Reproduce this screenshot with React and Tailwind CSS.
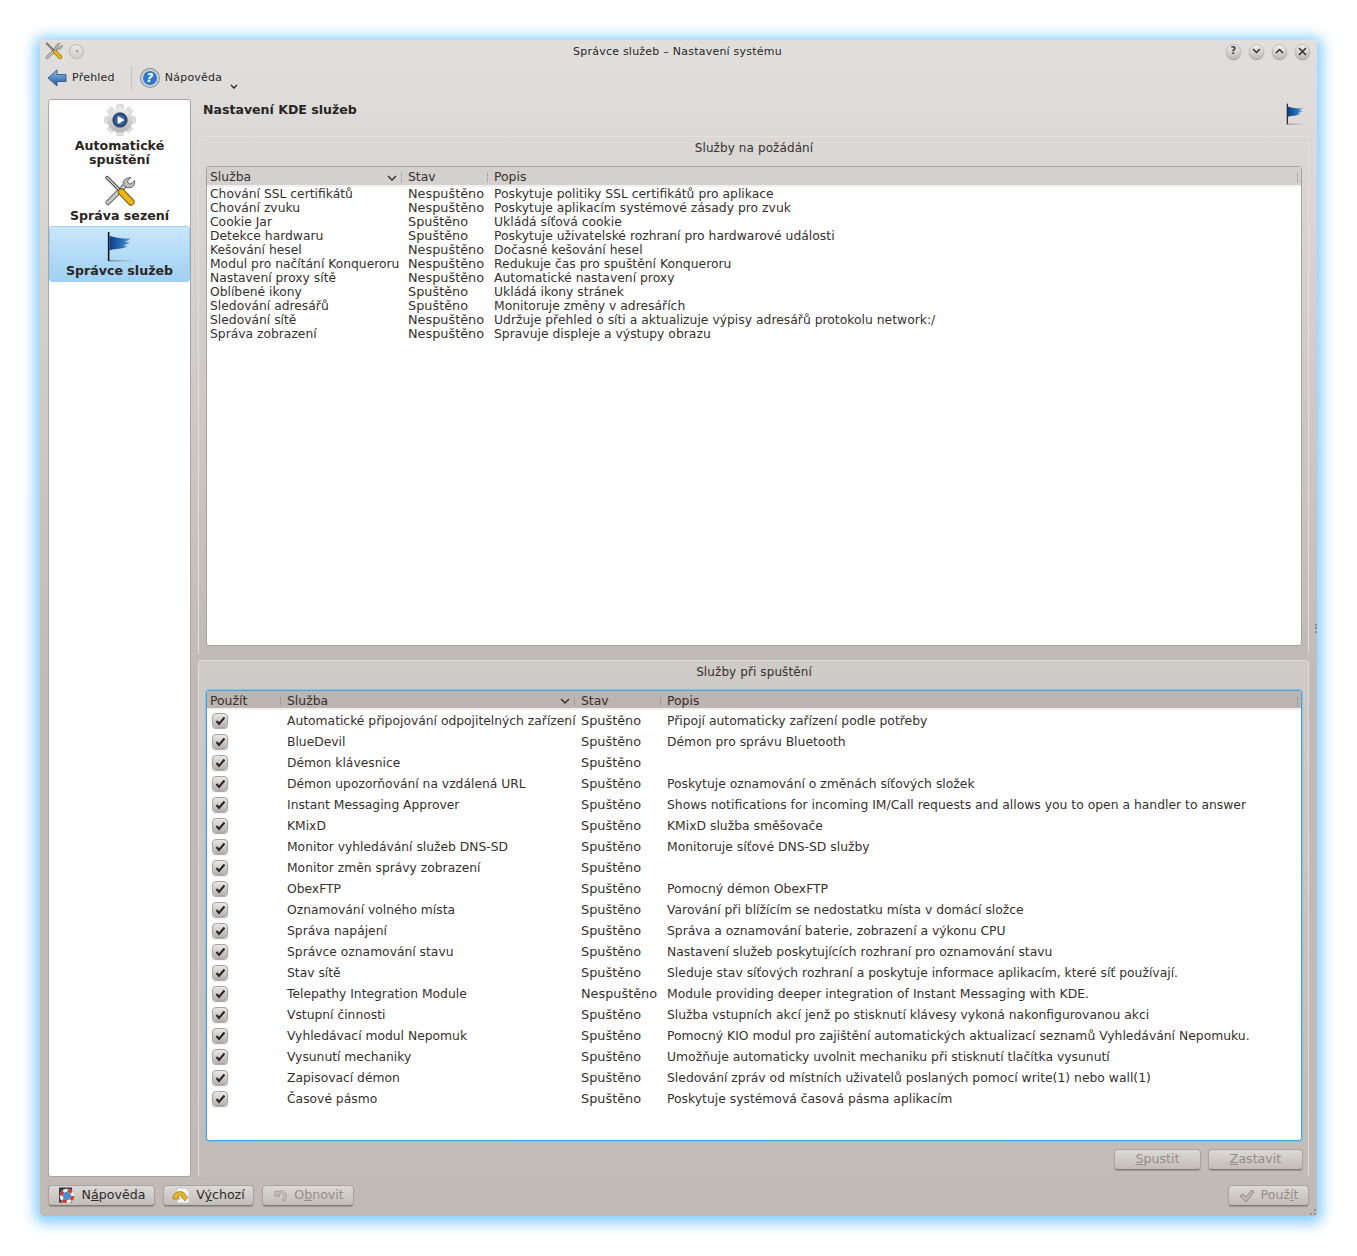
const F = '[font-family:"DejaVu_Sans",sans-serif]';

const t1 = [
  ['Chování SSL certifikátů','Nespuštěno','Poskytuje politiky SSL certifikátů pro aplikace'],
  ['Chování zvuku','Nespuštěno','Poskytuje aplikacím systémové zásady pro zvuk'],
  ['Cookie Jar','Spuštěno','Ukládá síťová cookie'],
  ['Detekce hardwaru','Spuštěno','Poskytuje uživatelské rozhraní pro hardwarové události'],
  ['Kešování hesel','Nespuštěno','Dočasné kešování hesel'],
  ['Modul pro načítání Konqueroru','Nespuštěno','Redukuje čas pro spuštění Konqueroru'],
  ['Nastavení proxy sítě','Nespuštěno','Automatické nastavení proxy'],
  ['Oblíbené ikony','Spuštěno','Ukládá ikony stránek'],
  ['Sledování adresářů','Spuštěno','Monitoruje změny v adresářích'],
  ['Sledování sítě','Nespuštěno','Udržuje přehled o síti a aktualizuje výpisy adresářů protokolu network:/'],
  ['Správa zobrazení','Nespuštěno','Spravuje displeje a výstupy obrazu'],
];
const t2 = [
  ['Automatické připojování odpojitelných zařízení','Spuštěno','Připojí automaticky zařízení podle potřeby'],
  ['BlueDevil','Spuštěno','Démon pro správu Bluetooth'],
  ['Démon klávesnice','Spuštěno',''],
  ['Démon upozorňování na vzdálená URL','Spuštěno','Poskytuje oznamování o změnách síťových složek'],
  ['Instant Messaging Approver','Spuštěno','Shows notifications for incoming IM/Call requests and allows you to open a handler to answer'],
  ['KMixD','Spuštěno','KMixD služba směšovače'],
  ['Monitor vyhledávání služeb DNS-SD','Spuštěno','Monitoruje síťové DNS-SD služby'],
  ['Monitor změn správy zobrazení','Spuštěno',''],
  ['ObexFTP','Spuštěno','Pomocný démon ObexFTP'],
  ['Oznamování volného místa','Spuštěno','Varování při blížícím se nedostatku místa v domácí složce'],
  ['Správa napájení','Spuštěno','Správa a oznamování baterie, zobrazení a výkonu CPU'],
  ['Správce oznamování stavu','Spuštěno','Nastavení služeb poskytujících rozhraní pro oznamování stavu'],
  ['Stav sítě','Spuštěno','Sleduje stav síťových rozhraní a poskytuje informace aplikacím, které síť používají.'],
  ['Telepathy Integration Module','Nespuštěno','Module providing deeper integration of Instant Messaging with KDE.'],
  ['Vstupní činnosti','Spuštěno','Služba vstupních akcí jenž po stisknutí klávesy vykoná nakonfigurovanou akci'],
  ['Vyhledávací modul Nepomuk','Spuštěno','Pomocný KIO modul pro zajištění automatických aktualizací seznamů Vyhledávání Nepomuku.'],
  ['Vysunutí mechaniky','Spuštěno','Umožňuje automaticky uvolnit mechaniku při stisknutí tlačítka vysunutí'],
  ['Zapisovací démon','Spuštěno','Sledování zpráv od místních uživatelů poslaných pomocí write(1) nebo wall(1)'],
  ['Časové pásmo','Spuštěno','Poskytuje systémová časová pásma aplikacím'],
];
const cellCls = ['text-[12.32px]', 'text-[12.85px]', 'text-[12.36px]'];
const cellCls2 = ['text-[12.32px] pt-[1px]', 'text-[12.85px]', 'text-[12.36px] pt-[1px]'];

function Flag({ size = 30 }) {
  return (
    <svg width={size} height={size} viewBox="0 0 32 32" className="shrink-0">
      <defs>
        <linearGradient id="fl" x1="0" x2="1" y1="0" y2="0">
          <stop offset="0" stopColor="#0b3f86" /><stop offset="0.6" stopColor="#2a70bd" /><stop offset="1" stopColor="#6aa6da" />
        </linearGradient>
        <linearGradient id="fs" x1="0" x2="1" y1="0" y2="0">
          <stop offset="0" stopColor="#555" stopOpacity="0.6" /><stop offset="1" stopColor="#555" stopOpacity="0" />
        </linearGradient>
      </defs>
      <rect x="5" y="30" width="26" height="1.5" fill="url(#fs)" />
      <rect x="4" y="1" width="1.6" height="30" fill="#111" />
      <path d="M5.6 5 C12 7 18 8 28 8 L22 11 L27 12 L20 15 L24 16 C18 19 12 18 5.6 20 Z" fill="url(#fl)" />
    </svg>
  );
}
function Tools({ size = 32 }) {
  return (
    <svg width={size} height={size} viewBox="0 0 32 32" className="shrink-0">
      <path d="M4 27.5 L21 10.5" stroke="#4c4c4c" strokeWidth="5" strokeLinecap="round" />
      <path d="M4 27.5 L21 10.5" stroke="#c4c6c6" strokeWidth="3.4" strokeLinecap="round" />
      <path d="M27 2.5 L23.5 6 L24.5 8.5 L27 9 L30.5 5.5 Q31.5 10.5 27.5 12.5 Q24 13.5 21.5 12 L19 9.5 Q18.5 3 27 2.5 Z" fill="#b9bbbb" stroke="#4c4c4c" strokeWidth="0.8" />
      <path d="M3 2.5 L16 15.5" stroke="#3c3c3c" strokeWidth="3.4" strokeLinecap="round" />
      <path d="M3 2.5 L16 15.5" stroke="#c9cbcb" strokeWidth="1.7" strokeLinecap="round" />
      <path d="M17.5 17 L27 27" stroke="#6b4e00" strokeWidth="7" strokeLinecap="round" />
      <path d="M17.5 17 L27 27" stroke="#efb516" strokeWidth="5.4" strokeLinecap="round" />
    </svg>
  );
}
function Gear() {
  const teeth = [0, 45, 90, 135, 180, 225, 270, 315];
  return (
    <svg width="32" height="32" viewBox="0 0 32 32" className="shrink-0">
      <defs>
        <linearGradient id="gg" x1="0" x2="0" y1="0" y2="1"><stop offset="0" stopColor="#f0f0f0" /><stop offset="1" stopColor="#b4b4b4" /></linearGradient>
        <radialGradient id="gb"><stop offset="0" stopColor="#6d9fd3" /><stop offset="1" stopColor="#15356a" /></radialGradient>
      </defs>
      {teeth.map(a => <rect key={a} x="12.8" y="0.5" width="6.4" height="7" rx="1" fill="url(#gg)" stroke="#a5a5a5" strokeWidth="0.4" transform={`rotate(${a} 16 16)`} />)}
      <circle cx="16" cy="16" r="12.5" fill="url(#gg)" />
      <circle cx="16" cy="16" r="7.5" fill="url(#gb)" stroke="#777" strokeWidth="0.5" />
      <path d="M13.8 12 L20.5 16 L13.8 20 Z" fill="#fff" />
    </svg>
  );
}
function Check() {
  return (
    <span className="flex h-[15px] w-[16px] items-center justify-center rounded-[4px] border border-[#aaa5a1] bg-gradient-to-b from-[#e9e7e5] to-[#b9b3af] shadow-[0_1px_1px_rgba(0,0,0,0.35)]">
      <svg width="11" height="10" viewBox="0 0 11 10"><path d="M1.5 5 L4 8 L9.5 1.5" fill="none" stroke="#252525" strokeWidth="2" /></svg>
    </span>
  );
}
function WinBtn({ children }) {
  return (
    <span className="flex h-[15px] w-[15px] items-center justify-center rounded-full border border-[#bdbab7] bg-gradient-to-b from-[#f2f1f0] to-[#c0bdba] text-[#444] shadow-[0_1px_1px_rgba(0,0,0,0.35)]">
      {children}
    </span>
  );
}
function Btn({ w, disabled, icon, children }) {
  return (
    <button className={`flex h-[21px] items-center justify-center gap-[6px] rounded-[4px] border border-[#aaa4a0] border-b-[#7f7975] bg-gradient-to-b from-[#dcd9d6] to-[#c3bdb9] text-[12.6px] leading-none shadow-[0_1px_1px_rgba(0,0,0,0.2)] ${w} ${disabled ? 'text-[#938d89]' : 'text-[#2e2a28]'}`}>
      {icon}{children}
    </button>
  );
}
function Head({ cols, children, focus }) {
  return (
    <div className={`grid shrink-0 items-center border-b-2 border-[#f2f0ee] pt-[3px] text-[12.4px] text-[#38302d] ${cols} ${focus ? 'h-[19px] bg-[#bdb5b1]' : 'h-[20px] bg-[#d4d0cd]'}`}>
      {children}
    </div>
  );
}
function HCell({ children, arrow }) {
  return (
    <div className="flex h-full items-center justify-between overflow-hidden pl-[3px] pr-[3px]">
      <span>{children}</span>
      <span className="flex items-center gap-[2px]">
        {arrow && <svg width="10" height="6" viewBox="0 0 10 6"><path d="M1 1 L5 5 L9 1" fill="none" stroke="#2f2a28" strokeWidth="1.3" /></svg>}
        <span className="ml-[2px] h-[9px] border-r border-dotted border-[#8d8783]" />
      </span>
    </div>
  );
}
function Side({ icon, label, active, cls }) {
  return (
    <div className={`flex flex-col items-center ${cls} ${active ? 'rounded-[3px] border border-[#9ed0f2] bg-gradient-to-b from-[#c9e7fb] to-[#9fd0f3]' : ''}`}>
      {icon}
      <div className="text-center text-[12.6px] font-bold leading-[14px] text-[#2a2522]">{label}</div>
    </div>
  );
}

export default function App() {
  const c1 = 'grid-cols-[198px_86px_1fr]';
  const c2 = 'grid-cols-[77px_294px_86px_1fr]';
  return (
    <div className={`h-[1256px] w-[1357px] bg-white pl-[40px] pt-[40px] ${F}`}>
      <div className="relative flex h-[1176px] w-[1277px] flex-col rounded-[3px] bg-gradient-to-b from-[#e1dfdd] to-[#c1bab6] to-55% shadow-[0_2px_14px_5px_rgba(110,195,250,0.85)]">
        {/* title bar */}
        <div className="grid h-[22px] shrink-0 grid-cols-[1fr_auto_1fr] items-center pl-[5px] pr-[7px]">
          <div className="flex items-center gap-[6px]">
            <Tools size={18} />
            <span className="flex h-[15px] w-[15px] items-center justify-center rounded-full border border-[#b9b6b3] bg-gradient-to-b from-[#ebe9e8] to-[#cfccc9]">
              <span className="h-[2px] w-[2px] rounded-full bg-[#888]" />
            </span>
          </div>
          <div className="pt-[2px] text-[11px] tracking-[0.23px] text-[#2a2522]">Správce služeb – Nastavení systému</div>
          <div className="flex items-center justify-end gap-[8px]">
            <WinBtn><span className="text-[10px] font-bold leading-none">?</span></WinBtn>
            <WinBtn><svg width="9" height="6" viewBox="0 0 9 6"><path d="M1 1 L4.5 4.5 L8 1" fill="none" stroke="#333" strokeWidth="1.5" /></svg></WinBtn>
            <WinBtn><svg width="9" height="6" viewBox="0 0 9 6"><path d="M1 5 L4.5 1.5 L8 5" fill="none" stroke="#333" strokeWidth="1.5" /></svg></WinBtn>
            <WinBtn><svg width="9" height="9" viewBox="0 0 9 9"><path d="M1 1 L8 8 M8 1 L1 8" fill="none" stroke="#333" strokeWidth="1.6" /></svg></WinBtn>
          </div>
        </div>
        {/* toolbar */}
        <div className="flex h-[31px] shrink-0 items-center pl-[7px] text-[11px] tracking-[0.22px] text-[#2a2522]">
          <svg width="20" height="20" viewBox="0 0 20 20">
            <defs><linearGradient id="ar" x1="0" x2="0" y1="0" y2="1"><stop offset="0" stopColor="#8db9e4" /><stop offset="1" stopColor="#1f5ea6" /></linearGradient></defs>
            <path d="M1 10 L10 2 L10 6.5 L19 6.5 L19 13.5 L10 13.5 L10 18 Z" fill="url(#ar)" stroke="#234d80" strokeWidth="0.8" />
          </svg>
          <span className="ml-[5px] pt-[1px]">Přehled</span>
          <span className="ml-[16px] h-[24px] border-l border-[#c5c2bf]" />
          <span className="ml-[9px] flex h-[18px] w-[18px] items-center justify-center rounded-full border-2 border-[#cfd3d6] bg-[#2f78c9] text-[12px] font-bold italic leading-none text-white shadow-[0_0_0_1px_#8b8b8b]">?</span>
          <span className="ml-[6px] pt-[1px]">Nápověda</span>
          <svg className="ml-[8px] mt-[18px]" width="8" height="6" viewBox="0 0 8 6"><path d="M1 1 L4 4 L7 1" fill="none" stroke="#222" strokeWidth="1.3" /></svg>
        </div>
        {/* content */}
        <div className="mt-[6px] flex h-[1078px] shrink-0 gap-[7px] pl-[8px] pr-[8px]">
          <div className="flex w-[143px] shrink-0 flex-col rounded-[3px] border border-[#aaa5a1] bg-white pt-[4px]">
            <Side cls="h-[71px] gap-[3px]" icon={<Gear />} label={<>Automatické<br />spuštění</>} />
            <Side cls="h-[51px] gap-[2px]" icon={<Tools />} label="Správa sezení" />
            <Side active cls="h-[56px] pt-[4px] gap-[2px]" icon={<Flag size={31} />} label="Správce služeb" />
          </div>
          <div className="flex min-w-0 flex-1 flex-col">
            <div className="flex h-[37px] shrink-0 items-start justify-between pl-[5px] pr-[3px]">
              <span className="pt-[3px] text-[12.55px] font-bold leading-[16px] text-[#2a2522]">Nastavení KDE služeb</span>
              <span className="pt-[4px]"><Flag size={22} /></span>
            </div>
            {/* group 1 */}
            <section className="flex h-[519px] shrink-0 flex-col rounded-[4px] border border-[#e2dfdd] border-b-[#c1bbb7] bg-gradient-to-b from-[#dbd8d5] to-[#c1bbb7] pb-[8px] pl-[7px] pr-[6px]">
              <div className="h-[29px] shrink-0 pt-[3px] text-center text-[12px] leading-[16px] tracking-[0.1px] text-[#38302d]">Služby na požádání</div>
              <div className="flex min-h-0 flex-1 flex-col overflow-hidden rounded-[3px] border border-[#a5a19e] bg-white">
                <Head cols={c1}>
                  <HCell arrow>Služba</HCell><HCell>Stav</HCell><HCell>Popis</HCell>
                </Head>
                <div className={`grid ${c1} auto-rows-[14px] leading-[14px] text-[#38302d]`}>
                  {t1.map(r => r.map((c, i) => <div key={r[0] + i} className={`whitespace-nowrap pl-[3px] ${cellCls[i]}`}>{c}</div>))}
                </div>
              </div>
            </section>
            {/* group 2 */}
            <section className="mt-[5px] flex min-h-0 flex-1 flex-col rounded-[4px] border border-[#dedbd8] border-b-0 bg-gradient-to-b from-[#cfcbc8] to-[#c2bcb8] pl-[7px] pr-[6px]">
              <div className="h-[29px] shrink-0 pt-[3px] text-center text-[12px] leading-[16px] tracking-[0.1px] text-[#38302d]">Služby při spuštění</div>
              <div className="flex h-[451px] shrink-0 flex-col overflow-hidden rounded-[3px] border border-[#3fa4e4] bg-white shadow-[0_0_1px_1px_rgba(110,192,240,0.7)]">
                <Head cols={c2} focus>
                  <HCell>Použít</HCell><HCell arrow>Služba</HCell><HCell>Stav</HCell><HCell>Popis</HCell>
                </Head>
                <div className="flex flex-col leading-[21px] text-[#38302d]">
                  {t2.map(r => (
                    <div key={r[0]} className={`grid h-[21px] grid-rows-[21px] ${c2}`}>
                      <div className="flex items-center pl-[5px]"><Check /></div>
                      {r.map((c, i) => <div key={i} className={`whitespace-nowrap pl-[3px] ${cellCls2[i]}`}>{c}</div>)}
                    </div>
                  ))}
                </div>
              </div>
              <div className="-mr-[1px] mt-[8px] flex justify-end gap-[7px]">
                <Btn w="w-[87px]" disabled><span><u>S</u>pustit</span></Btn>
                <Btn w="w-[95px]" disabled><span><u>Z</u>astavit</span></Btn>
              </div>
            </section>
          </div>
        </div>
        {/* bottom */}
        <div className="mt-[8px] flex items-center justify-between pl-[8px] pr-[8px]">
          <div className="flex gap-[8px]">
            <Btn w="w-[107px]" icon={
              <svg width="18" height="17" viewBox="0 0 18 17">
                <rect x="1" y="0.5" width="13" height="15" fill="#2f3a4a" />
                <circle cx="9" cy="9" r="5.8" fill="#4a90d0" stroke="#f4f4f4" strokeWidth="3" />
                <circle cx="9" cy="9" r="5.8" fill="none" stroke="#d43a2a" strokeWidth="3" strokeDasharray="4.6 4.5" />
              </svg>}>
              <span>N<u>á</u>pověda</span>
            </Btn>
            <Btn w="w-[91px]" icon={
              <svg width="18" height="17" viewBox="0 0 18 17">
                <path d="M5 1 L13 1 L17 4 L17 16 L5 16 Z" fill="#f4f4f2" stroke="#bbb" strokeWidth="0.6" />
                <path d="M1 10 Q2 5 8 4.5 Q13 4.5 14.5 10 L16 10 L13 14 L9.5 10 L11 10 Q9 8 6 9 L7.5 12 L1 12 Z" fill="#e6b52c" stroke="#8c6a10" strokeWidth="0.6" />
              </svg>}>
              <span>V<u>ý</u>chozí</span>
            </Btn>
            <Btn w="w-[92px]" disabled icon={
              <svg width="16" height="16" viewBox="0 0 16 16">
                <path d="M3 3 L3 8 L8 8 L6 6 Q9 4 11.5 6.5 Q13 9 10.5 12 L12.5 13.5 Q16 9.5 13.5 5 Q9.5 1 5 4 Z" fill="#c9c5c2" stroke="#918b87" strokeWidth="0.7" />
              </svg>}>
              <span>O<u>b</u>novit</span>
            </Btn>
          </div>
          <Btn w="w-[81px]" disabled icon={
            <svg width="16" height="14" viewBox="0 0 16 14">
              <path d="M1 7 L4 5 L7 8 L13 1 L15 3 L7 13 Z" fill="#bdb8b5" stroke="#827c78" strokeWidth="0.8" />
            </svg>}>
            <span>Použ<u>í</u>t</span>
          </Btn>
        </div>
        {/* splitter handle and size grip */}
        <span className="absolute left-[1275px] top-[584px] h-[9px] border-r-2 border-dotted border-[#8d8783]" />
        <span className="absolute bottom-[1px] right-[1px] h-[6px] w-[6px] border-b-2 border-r-2 border-dotted border-[#9a938f]" />
      </div>
    </div>
  );
}
